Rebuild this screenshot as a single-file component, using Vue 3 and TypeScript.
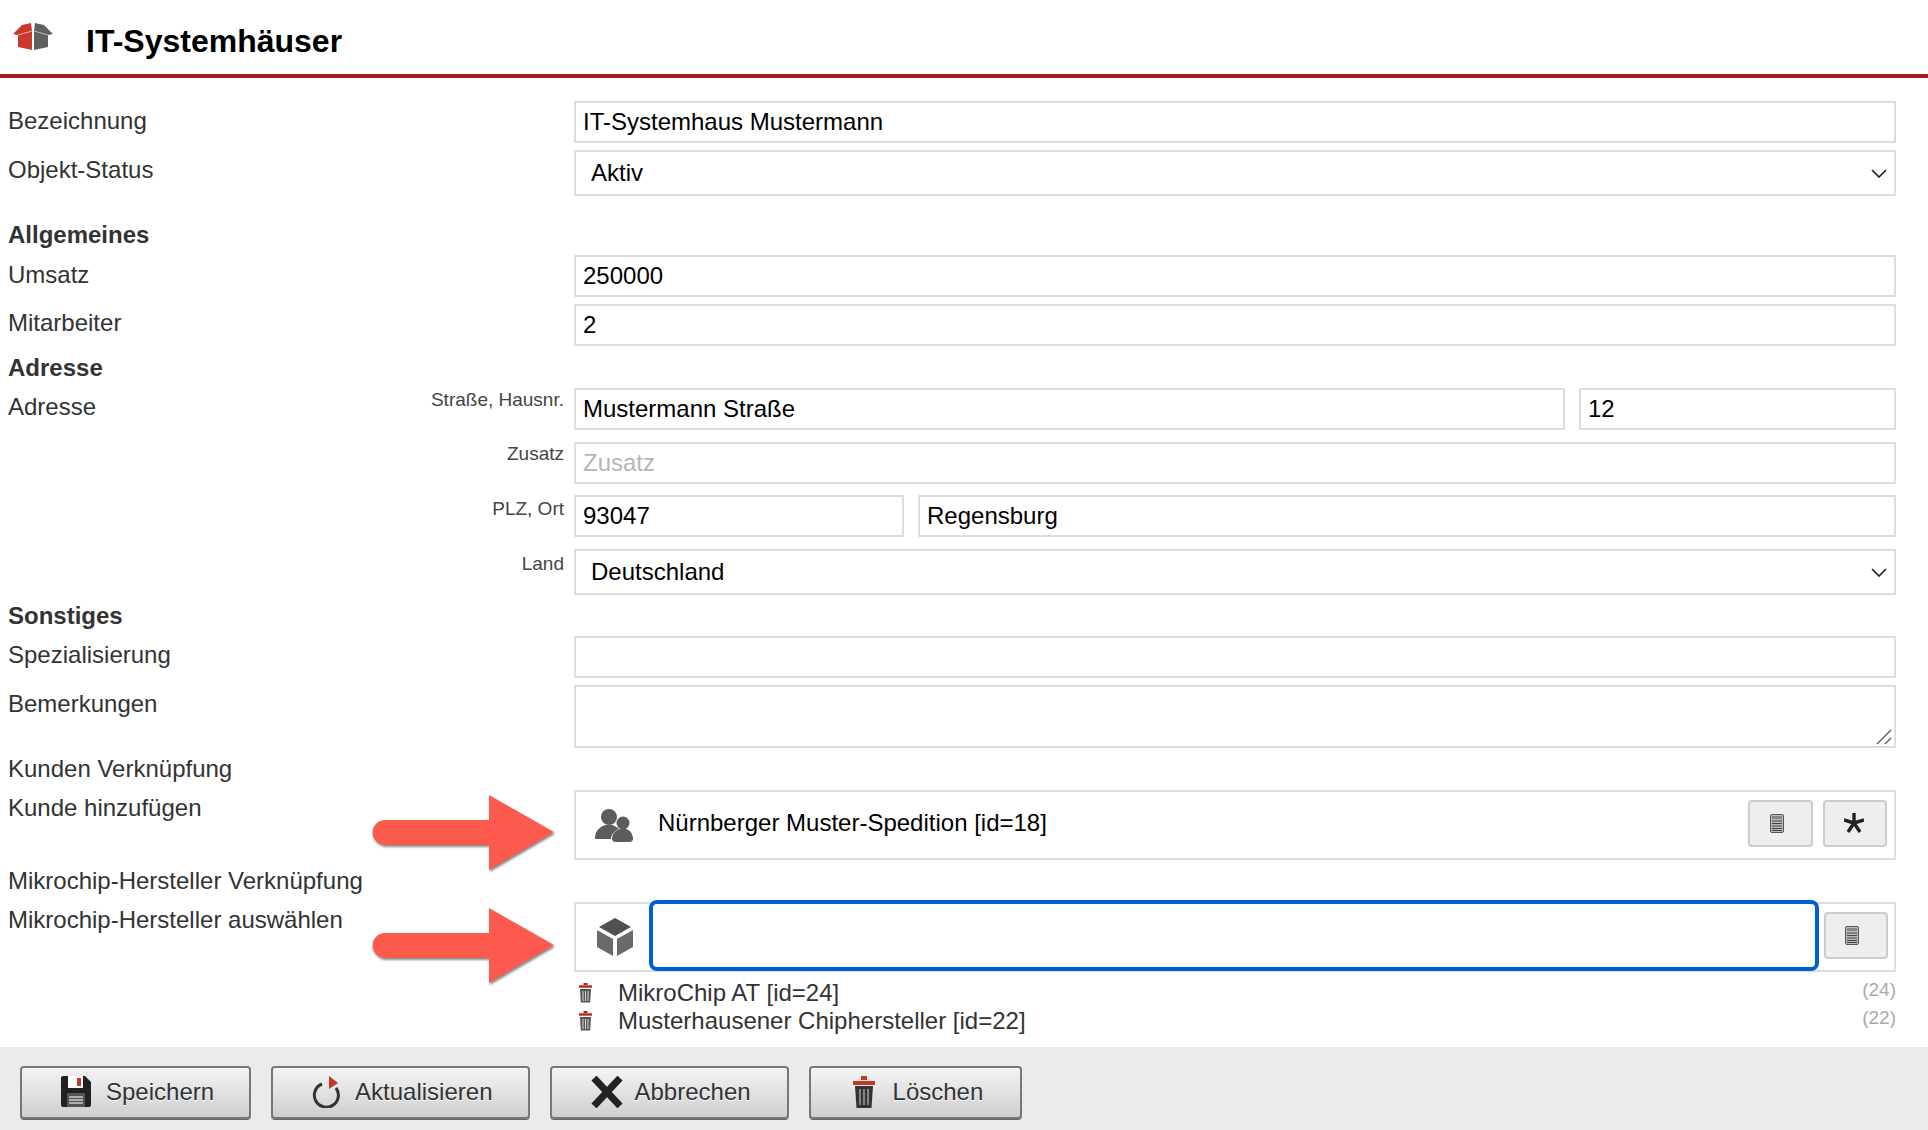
<script setup lang="ts">
import { ref } from 'vue'

const bezeichnung = ref<string>('IT-Systemhaus Mustermann')
const status = ref<string>('Aktiv')
const land = ref<string>('Deutschland')

interface Linked {
  name: string
  id: number
}

const hersteller: Linked[] = [
  { name: 'MikroChip AT [id=24]', id: 24 },
  { name: 'Musterhausener Chiphersteller [id=22]', id: 22 }
]
</script>

<template>
  <div class="page">
    <header class="head">
      <svg class="logo" viewBox="0 0 40 27" width="40" height="27">
        <path d="M9 2 L18 0 L19 8 L19 27 L5 24 L5 12 L0 11 Z" fill="#c8392b" />
        <path d="M31 2 L22 0 L21 8 L21 27 L35 24 L35 12 L40 11 Z" fill="#606060" />
        <path d="M19 8 L5 12 M21 8 L35 12" stroke="#fff" stroke-width="1" opacity=".6" />
      </svg>
      <h1>IT-Systemhäuser</h1>
    </header>

    <main class="form">
      <div class="row">
        <label class="lab-high">Bezeichnung</label>
        <input v-model="bezeichnung" type="text" />
      </div>
      <div class="row mt7">
        <label class="lab-high">Objekt-Status</label>
        <div class="select-wrap">
          <select v-model="status"><option>Aktiv</option></select>
          <svg class="chev" viewBox="0 0 16 9" width="16" height="9"><path d="M1 1 L8 8 L15 1" /></svg>
        </div>
      </div>

      <h2 class="mt25">Allgemeines</h2>
      <div class="row mt6">
        <label class="lab-high">Umsatz</label>
        <input type="text" value="250000" />
      </div>
      <div class="row mt7">
        <label>Mitarbeiter</label>
        <input type="text" value="2" />
      </div>

      <h2 class="mt8">Adresse</h2>
      <div class="row mt6">
        <div class="addr-label">
          <label>Adresse</label>
          <small class="s-street">Straße, Hausnr.</small>
        </div>
        <div class="pair pair-street">
          <input type="text" value="Mustermann Straße" />
          <input type="text" value="12" />
        </div>
      </div>
      <div class="row mt12">
        <div class="addr-label end"><small class="s-extra">Zusatz</small></div>
        <input type="text" placeholder="Zusatz" />
      </div>
      <div class="row mt11">
        <div class="addr-label end"><small class="s-city">PLZ, Ort</small></div>
        <div class="pair pair-city">
          <input type="text" value="93047" />
          <input type="text" value="Regensburg" />
        </div>
      </div>
      <div class="row mt12">
        <div class="addr-label end"><small class="s-land">Land</small></div>
        <div class="select-wrap">
          <select v-model="land"><option>Deutschland</option></select>
          <svg class="chev" viewBox="0 0 16 9" width="16" height="9"><path d="M1 1 L8 8 L15 1" /></svg>
        </div>
      </div>

      <h2 class="mt7">Sonstiges</h2>
      <div class="row mt6">
        <label>Spezialisierung</label>
        <input type="text" />
      </div>
      <div class="row mt7">
        <label>Bemerkungen</label>
        <div class="area-wrap">
          <textarea></textarea>
          <svg class="grip" viewBox="0 0 16 16" width="16" height="16">
            <path d="M1 15 L15 1 M9 15 L15 9" />
          </svg>
        </div>
      </div>

      <h3 class="mt7">Kunden Verknüpfung</h3>
      <div class="row mt7 arrow-row">
        <label class="lab-link">Kunde hinzufügen</label>
        <svg class="arrow arrow-a" viewBox="0 0 186 80" width="186" height="80">
          <path d="M15 26 H119 V1 L184 38 L119 76 V51 H15 A12.5 12.5 0 0 1 15 26 Z" />
        </svg>
        <div class="picker">
          <svg class="people" viewBox="0 0 38 34" width="38" height="34">
            <circle cx="14" cy="9" r="8" />
            <path d="M0 30 C0 22 6 18 11 17 L17 17 C20 18 22 19 24 21 C19 23 16 27 16 31 L2 31 C1 31 0 31 0 30 Z" />
            <circle cx="28" cy="15" r="6.5" />
            <path d="M17 31 C17 25 21 22 25 21 L31 21 C35 22 38 26 38 31 C38 33 36 34 34 34 L21 34 C19 34 17 33 17 31 Z" />
          </svg>
          <span class="picked">Nürnberger Muster-Spedition [id=18]</span>
          <button class="mini" type="button">
            <svg class="doc" viewBox="0 0 14 19" width="14" height="19">
              <rect x=".5" y=".5" width="13" height="18" rx="1.5" fill="#bbb" stroke="#555" />
              <rect x="2" y="2" width="10" height="3" fill="#888" />
              <path d="M2 7 H12 M2 9.5 H12 M2 12 H12 M2 14.5 H12 M2 16.5 H12" stroke="#444" stroke-width="1" />
            </svg>
          </button>
          <button class="mini star" type="button">
            <svg viewBox="0 0 20 20" width="20" height="20">
              <path d="M10 0 V10 M0 7 L10 10 M20 7 L10 10 M4 19 L10 10 M16 19 L10 10" stroke="#222" stroke-width="3.4" fill="none" />
            </svg>
          </button>
        </div>
      </div>

      <h3 class="mt7">Mikrochip-Hersteller Verknüpfung</h3>
      <div class="row mt7 arrow-row">
        <label class="lab-link">Mikrochip-Hersteller auswählen</label>
        <svg class="arrow arrow-b" viewBox="0 0 186 80" width="186" height="80">
          <path d="M15 26 H119 V1 L184 38 L119 76 V51 H15 A12.5 12.5 0 0 1 15 26 Z" />
        </svg>
        <div class="picker picker-focus">
          <svg class="cube" viewBox="0 0 36 38" width="36" height="38">
            <path d="M18 0 L34 9 L18 18 L2 9 Z" fill="#505050" />
            <path d="M0 12 L16 21 L16 38 L0 29 Z" fill="#6a6a6a" />
            <path d="M36 12 L20 21 L20 38 L36 29 Z" fill="#6a6a6a" />
          </svg>
          <input class="focused" type="text" />
          <button class="mini" type="button">
            <svg class="doc" viewBox="0 0 14 19" width="14" height="19">
              <rect x=".5" y=".5" width="13" height="18" rx="1.5" fill="#bbb" stroke="#555" />
              <rect x="2" y="2" width="10" height="3" fill="#888" />
              <path d="M2 7 H12 M2 9.5 H12 M2 12 H12 M2 14.5 H12 M2 16.5 H12" stroke="#444" stroke-width="1" />
            </svg>
          </button>
        </div>
      </div>

      <ul class="linked">
        <li v-for="item in hersteller" :key="item.id">
          <svg class="bin" viewBox="0 0 15 20" width="15" height="20">
            <path d="M5.5 1 H9.5" stroke="#b3261e" stroke-width="2" />
            <path d="M1 3.5 H14" stroke="#b3261e" stroke-width="2.4" />
            <path d="M2 6 H13 L12.2 19.5 H2.8 Z" fill="#555" />
            <path d="M5 8 V18 M7.5 8 V18 M10 8 V18" stroke="#ddd" stroke-width="1" />
          </svg>
          <span class="linked-name">{{ item.name }}</span>
          <span class="linked-id">({{ item.id }})</span>
        </li>
      </ul>
    </main>

    <footer class="foot">
      <button class="btn" type="button">
        <svg viewBox="0 0 30 31" width="30" height="31">
          <path d="M2 0 H24 L30 6 V29 A2 2 0 0 1 28 31 H2 A2 2 0 0 1 0 29 V2 A2 2 0 0 1 2 0 Z" fill="#222" />
          <rect x="7" y="0" width="15" height="12" fill="#fff" />
          <rect x="16" y="2" width="4" height="8" fill="#c0392b" />
          <rect x="6" y="17" width="18" height="14" fill="#555" />
          <path d="M8 21 H22 M8 24 H22 M8 27 H22" stroke="#ccc" stroke-width="1.4" />
        </svg>
        Speichern
      </button>
      <button class="btn" type="button">
        <svg viewBox="0 0 28 32" width="28" height="32">
          <path d="M10 8 A12 12 0 1 0 24 12" fill="none" stroke="#333" stroke-width="3" />
          <path d="M17 0 L26 7 L17 13 Z" fill="#c0392b" />
        </svg>
        Aktualisieren
      </button>
      <button class="btn" type="button">
        <svg class="ic-x" viewBox="0 0 32 32" width="32" height="32">
          <path d="M3 2 L29 30 M29 2 L3 30" stroke="#222" stroke-width="7" />
        </svg>
        Abbrechen
      </button>
      <button class="btn btn-last" type="button">
        <svg class="ic-bin" viewBox="0 0 22 32" width="22" height="32">
          <path d="M8 2 H14 M0 7 H22" stroke="#c0392b" stroke-width="4" />
          <path d="M2 10 H20 L18.5 32 H3.5 Z" fill="#333" />
          <path d="M7 13 V29 M11 13 V29 M15 13 V29" stroke="#bbb" stroke-width="1.2" />
        </svg>
        Löschen
      </button>
    </footer>
  </div>
</template>

<style>
html,
body {
  margin: 0;
  background: #fff;
}
</style>

<style scoped>
.page {
  height: 1130px;
  display: flex;
  flex-direction: column;
  font-family: "Liberation Sans", Arial, sans-serif;
  font-size: 24px;
  color: #333;
  overflow: hidden;
}

.head {
  height: 78px;
  box-sizing: border-box;
  border-bottom: 4px solid #a31a1c;
  display: flex;
  align-items: center;
  padding: 8px 0 0 13px;
}
.logo {
  margin-top: -9px;
}
.head h1 {
  margin: 0 0 0 33px;
  font-size: 32px;
  color: #000;
}

.form {
  padding: 23px 32px 0 0;
}

.row {
  display: grid;
  grid-template-columns: 574px 1fr;
  position: relative;
}
label {
  padding-left: 8px;
  line-height: 38px;
}
.lab-high {
  line-height: 40px;
}
.lab-link {
  line-height: 36px;
}

h2,
h3 {
  margin-bottom: 0;
  margin-left: 8px;
  height: 28px;
  line-height: 28px;
  font-size: 24px;
}
h3 {
  font-weight: normal;
}

.mt6 { margin-top: 6px; }
.mt7 { margin-top: 7px; }
.mt8 { margin-top: 8px; }
.mt11 { margin-top: 11px; }
.mt12 { margin-top: 12px; }
.mt25 { margin-top: 25px; }

input,
textarea,
select {
  box-sizing: border-box;
  width: 100%;
  border: 2px solid #ddd;
  background: #fff;
  font: inherit;
  color: #000;
  outline: none;
  border-radius: 0;
  margin: 0;
}
input {
  height: 42px;
  padding: 0 7px;
}
input::placeholder {
  color: #b5b5b5;
}

.select-wrap {
  position: relative;
  height: 46px;
}
select {
  appearance: none;
  height: 46px;
  padding: 0 15px 2px;
}
.chev {
  position: absolute;
  right: 9px;
  top: 19px;
  fill: none;
  stroke: #222;
  stroke-width: 1.7;
}

.addr-label {
  display: flex;
  justify-content: space-between;
  padding-right: 10px;
}
.addr-label.end {
  justify-content: flex-end;
}
small {
  font-size: 19px;
  line-height: 22px;
  color: #444;
}
.s-street { margin-top: 1px; }
.s-extra { margin-top: 1px; }
.s-city { margin-top: 3px; }
.s-land { margin-top: 4px; }

.pair {
  display: grid;
  column-gap: 14px;
}
.pair-street {
  grid-template-columns: 991px 1fr;
}
.pair-city {
  grid-template-columns: 330px 1fr;
}

.area-wrap {
  position: relative;
  height: 63px;
}
textarea {
  height: 63px;
  resize: none;
  display: block;
}
.grip {
  position: absolute;
  right: 4px;
  bottom: 3px;
  fill: none;
  stroke: #666;
  stroke-width: 1.5;
}

.arrow {
  position: absolute;
  left: 370px;
  fill: #fb5a4c;
  filter: drop-shadow(1px 2px 1px rgba(0, 0, 0, 0.45));
}
.arrow-a {
  top: 4px;
}
.arrow-b {
  top: 5px;
}

.picker {
  box-sizing: border-box;
  height: 70px;
  border: 2px solid #ddd;
  display: flex;
  align-items: center;
  padding: 0 7px 0 19px;
  color: #000;
}
.people {
  fill: #5c5c5c;
}
.picked {
  margin: -4px 0 0 25px;
  flex: 1;
}
.mini {
  box-sizing: border-box;
  flex: none;
  width: 65px;
  height: 47px;
  margin-top: -4px;
  background: #eee;
  border: 2px solid #ccc;
  border-radius: 4px;
  display: flex;
  align-items: center;
  justify-content: center;
  padding: 0;
}
.mini + .mini {
  margin-left: 10px;
}
.star {
  width: 64px;
}
.doc {
  margin-right: 8px;
}
.star svg {
  margin-right: 3px;
}

.picker-focus {
  padding: 0 6px 0 21px;
}
.picker-focus .mini {
  width: 64px;
}
.focused {
  box-sizing: border-box;
  width: 1170px;
  height: 71px;
  margin: -3px 5px 0 16px;
  flex: none;
  border: 4px solid #0060d0;
  border-radius: 8px;
}

.linked {
  list-style: none;
  margin: 7px 0 0 574px;
  padding: 0;
  line-height: 28px;
}
.linked li {
  display: flex;
  align-items: center;
}
.bin {
  margin-left: 4px;
}
.linked-name {
  margin-left: 25px;
  flex: 1;
}
.linked-id {
  font-size: 19px;
  color: #aaa;
  margin-top: -7px;
}

.foot {
  margin-top: auto;
  height: 83px;
  box-sizing: border-box;
  background: #ebebeb;
  display: flex;
  gap: 20px;
  padding: 19px 0 0 20px;
}
.btn {
  height: 53px;
  box-sizing: border-box;
  border: 2px solid #777;
  border-radius: 4px;
  background: linear-gradient(#f4f4f4, #cfcfcf);
  box-shadow: 0 1px 0 #666, inset 0 1px 0 #fff;
  padding: 0 36px 2px 39px;
  font: inherit;
  color: #333;
  text-shadow: 0 1px 0 #fff;
  display: flex;
  align-items: center;
  gap: 15px;
}
.btn:first-child {
  padding-right: 35px;
}
.btn-last {
  padding-right: 37px;
}
.ic-x {
  margin-right: -4px;
}
.ic-bin {
  margin: 0 3px;
}
</style>
